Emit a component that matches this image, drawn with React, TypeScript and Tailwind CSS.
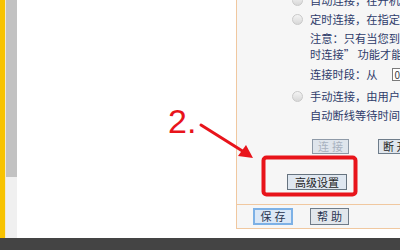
import React from "react";

const font = { fontFamily: '"Noto Sans CJK SC", "Noto Sans", sans-serif' };

const Radio: React.FC = () => (
  <span className="w-[11px] h-[11px] rounded-full border border-[#c9c9c9] bg-gradient-to-b from-[#f4f4f4] to-[#d8d8d8] shrink-0" />
);

const RadioRow: React.FC<{ text: string; h: string }> = ({ text, h }) => (
  <div className={`flex items-center ${h}`}>
    <div className="w-[55px] shrink-0" />
    <Radio />
    <span className="ml-[7px] whitespace-nowrap">{text}</span>
  </div>
);

const TextRow: React.FC<{ children: React.ReactNode; h: string }> = ({ children, h }) => (
  <div className={`flex items-center ${h} pl-[73px] whitespace-nowrap`}>{children}</div>
);

const App: React.FC = () => {
  return (
    <div className="relative w-[400px] h-[250px] overflow-hidden bg-white flex flex-col" style={font}>
      <div className="flex h-[238px] shrink-0">
        {/* left frame edge + scrollbar */}
        <div className="w-[5px] shrink-0 bg-[#f8c300]" />
        <div className="w-[1px] shrink-0 bg-[#f3ead0]" />
        <div className="w-[11px] shrink-0 flex flex-col">
          <div className="h-[177px] bg-[#c2c2c2]" />
          <div className="flex-1 bg-[#f0f0f0]" />
        </div>
        <div className="w-[219px] shrink-0 bg-white" />

        {/* settings panel */}
        <div className="w-[164px] shrink-0 min-w-0 flex flex-col overflow-hidden">
          <div className="h-[229px] bg-[#f6f6f6] border-l border-b border-[#f0c8a0] overflow-hidden text-[11.25px] text-[#2e3b6a] flex flex-col">
            <div className="-mt-[10px]">
              <RadioRow h="h-[20px]" text="自动连接，在开机和断线后自动进行连接。" />
              <RadioRow h="h-[18px]" text="定时连接，在指定的时间段自动进行连接。" />
              <div className="mt-[2px] pl-[73px] leading-[16px] whitespace-nowrap">
                <div>注意：只有当您到“系统工具”菜单的“时间设置”项</div>
                <div>时连接” 功能才能生效。</div>
              </div>
              <TextRow h="h-[24px]">
                <span>连接时段：从</span>
                <span className="ml-[14px] w-[30px] h-[13px] border border-[#7a7a7a] bg-white text-[10px] leading-[11px] pl-[2px] text-[#444]">
                  0
                </span>
              </TextRow>
              <RadioRow h="h-[20px]" text="手动连接，由用户手动进行连接。" />
              <TextRow h="h-[18px]">自动断线等待时间：15 分（0 表示不自动断线）</TextRow>
            </div>

            <div className="flex mt-[15px] h-[15px] whitespace-nowrap">
              <div className="ml-[75px] w-[37px] shrink-0 h-[15px] border border-[#8e9aa8] bg-[#dfe5ec] text-[#a8b2bf] text-[11px] leading-[13px] flex justify-center tracking-[3px] pl-[3px]">
                连接
              </div>
              <div className="ml-[29px] w-[40px] shrink-0 h-[15px] border border-[#6e7c8a] bg-[#e0e6ed] text-[#222] text-[11px] leading-[13px] pl-[4px]">
                断 开
              </div>
            </div>

            <div className="flex mt-[20px]">
              <div className="ml-[50px] w-[60px] h-[16px] border border-[#66737f] bg-[#dfe7f0] text-[#222] text-[11px] leading-[14px] flex justify-center">
                高级设置
              </div>
            </div>

            <div className="mt-[14px] border-t border-[#f0c8a0] flex pt-[3px]">
              <div className="ml-[16px] w-[40px] h-[17px] border-2 border-[#7db1e6] bg-[#dbe8f7] text-[#2a3550] text-[11px] leading-[13px] flex justify-center tracking-[3px] pl-[3px]">
                保存
              </div>
              <div className="ml-[17px] w-[39px] h-[17px] border border-[#6f7b88] bg-[#e1e6eb] text-[#2a3550] text-[11px] leading-[15px] flex justify-center tracking-[3px] pl-[3px]">
                帮助
              </div>
            </div>
          </div>
          <div className="flex-1 bg-white" />
        </div>
      </div>
      <div className="flex-1 bg-[#444444]" />

      {/* annotation overlay */}
      <div
        className="absolute left-[168px] top-[104px] text-[34px] leading-none text-[#e8141b]"
        style={{ fontFamily: '"Liberation Sans", Arial, sans-serif' }}
      >
        2.
      </div>
      <svg className="absolute left-0 top-0 pointer-events-none" width="400" height="250">
        <line x1="201" y1="125" x2="244" y2="152" stroke="#e8141b" strokeWidth="3" strokeLinecap="round" />
        <polygon points="253,158 238,156 246,145" fill="#e8141b" />
        <rect x="263.5" y="157.5" width="92" height="37" rx="3" fill="none" stroke="#e8141b" strokeWidth="4" />
      </svg>
    </div>
  );
};

export default App;
